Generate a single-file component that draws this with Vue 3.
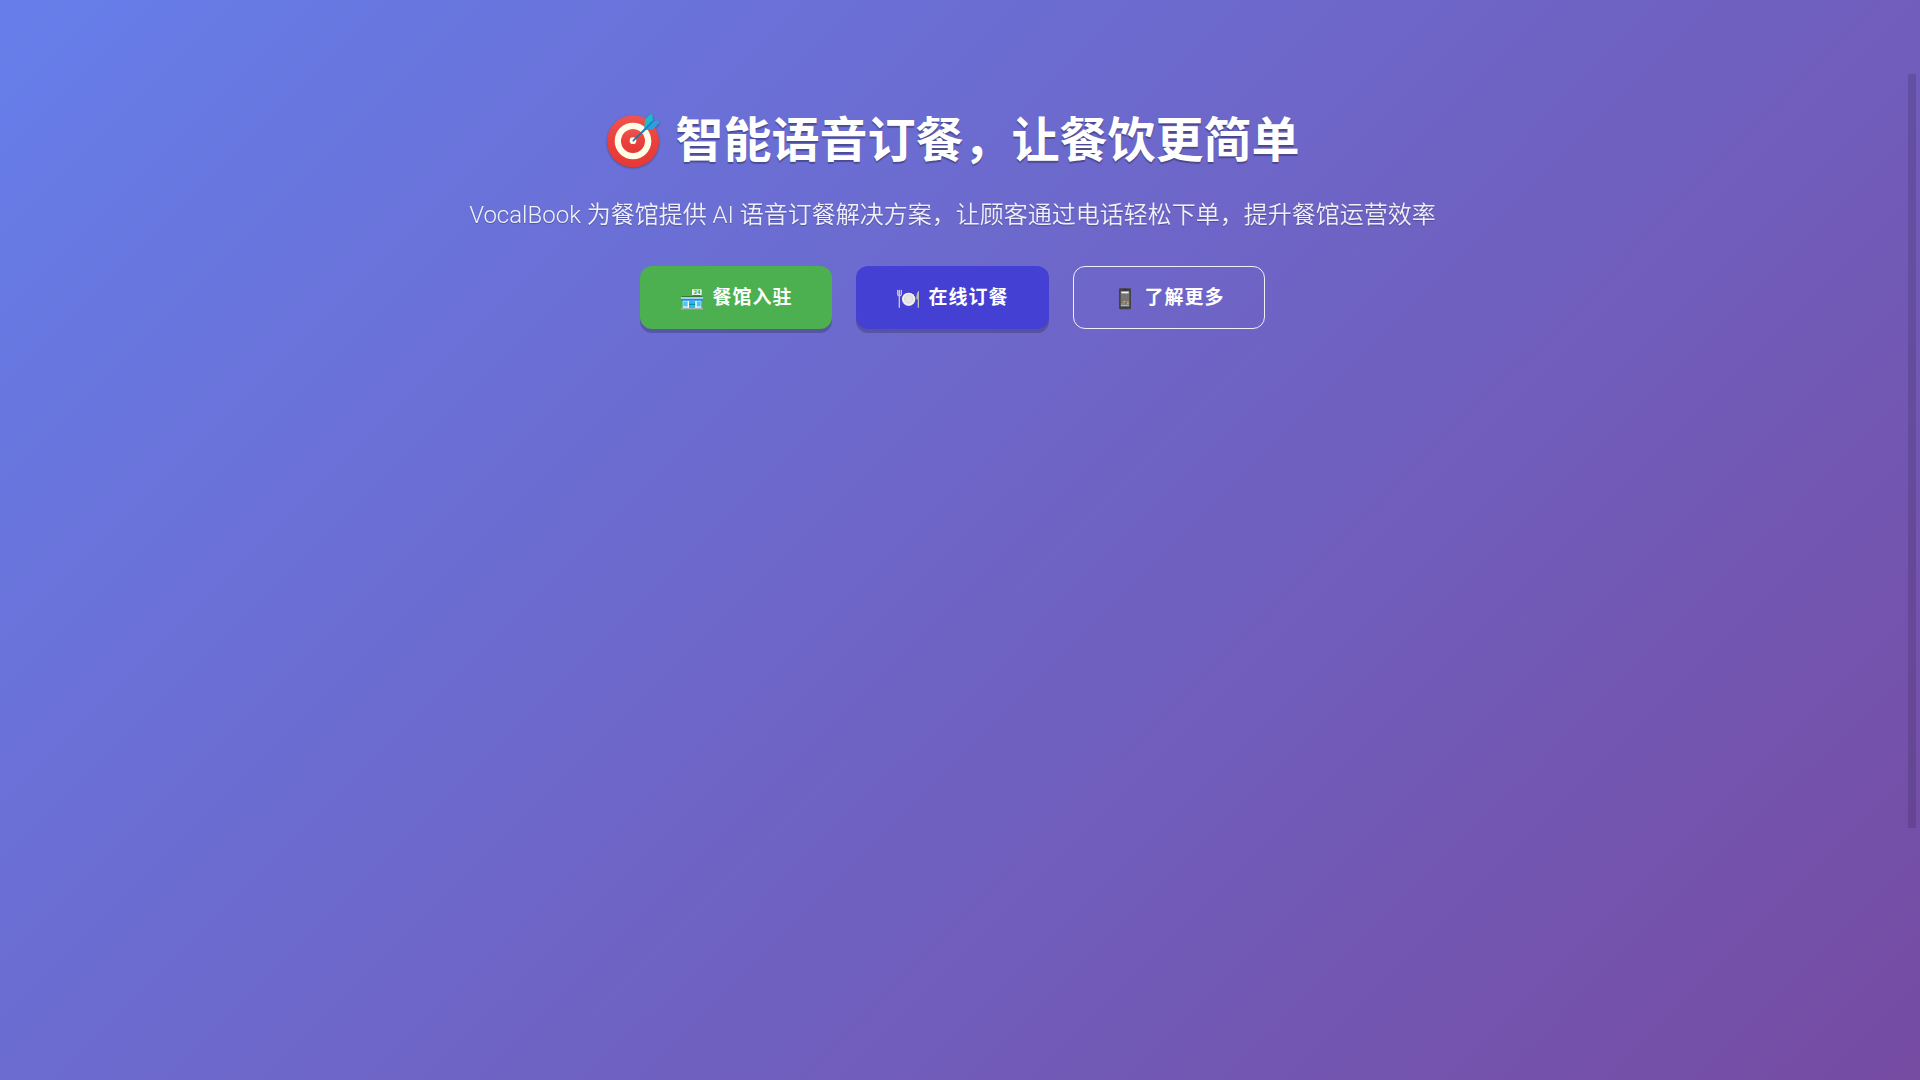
<template>
  <div class="page">
    <main class="hero">
      <h1 class="hero__title">
        <svg class="hero__target" viewBox="18 18 168 168" aria-hidden="true">
          <defs>
            <linearGradient id="targetRed" x1="0" y1="0" x2="0" y2="1">
              <stop offset="0" stop-color="#ef5350" />
              <stop offset="0.55" stop-color="#ea3f3b" />
              <stop offset="1" stop-color="#e53935" />
            </linearGradient>
          </defs>
          <circle cx="102" cy="103" r="78" fill="url(#targetRed)" />
          <circle cx="102" cy="102" r="55" fill="#fffde7" />
          <circle cx="102" cy="102" r="36" fill="url(#targetRed)" />
          <circle cx="102" cy="101" r="10" fill="#fffde7" />
          <path
            d="M103 101L138 67"
            stroke="#1679a8"
            stroke-width="5"
            stroke-linecap="round"
          />
          <path d="M135 70L138 38L154 22Q160 20 161 26L162 44Z" fill="#1cbccd" />
          <path d="M135 70L160 44L176 40Q183 42 180 48L164 66Z" fill="#2f9fdc" />
          <path
            d="M130 75L160 44"
            stroke="#1c84c0"
            stroke-width="6"
            stroke-linecap="round"
          />
        </svg>
        <span>智能语音订餐，让餐饮更简单</span>
      </h1>
      <p class="hero__subtitle">
        VocalBook 为餐馆提供 AI 语音订餐解决方案，让顾客通过电话轻松下单，提升餐馆运营效率
      </p>
      <div class="hero__actions">
        <button type="button" class="hero__button hero__button--register">
          <svg class="hero__icon" viewBox="147 92 72 72" aria-hidden="true">
            <path d="M186 118H207V124H186Z" fill="#1976d2" />
            <rect x="183" y="102" width="29" height="17" fill="#e6f4ea" />
            <text x="188" y="117" font-size="17" font-weight="700" fill="#2e9e5b">
              24
            </text>
            <rect x="155" y="134" width="56" height="25" fill="#b3e5fc" />
            <rect x="157" y="139" width="13" height="13" fill="#4fc3f7" />
            <rect x="197" y="139" width="12" height="13" fill="#4fc3f7" />
            <rect x="174" y="137" width="19" height="21" fill="#29b6f6" />
            <path d="M174 147H193" stroke="#00897b" stroke-width="3" />
            <path d="M172 137V158M195 137V158" stroke="#fff" stroke-width="3" />
            <path d="M152 122H214V127H152Z" fill="#2e7d32" />
            <path d="M150 126H216V131H150Z" fill="#e1f5fe" />
            <path d="M150 130H216V136H150Z" fill="#1e88e5" />
            <path d="M150 158H216V162H150Z" fill="#a5b8b0" />
          </svg>
          <span>餐馆入驻</span>
        </button>
        <button type="button" class="hero__button hero__button--order">
          <svg class="hero__icon" viewBox="152 92 72 72" aria-hidden="true">
            <path
              d="M157 105V116Q157 121 162 122Q168 121 168 116V105M162 105V156"
              fill="none"
              stroke="#c9c7bd"
              stroke-width="4"
              stroke-linecap="round"
            />
            <circle cx="190" cy="132" r="20" fill="#d5d5d5" />
            <circle cx="190" cy="131" r="19" fill="#f1f1f1" />
            <circle
              cx="190"
              cy="131"
              r="13"
              fill="#e4e4e4"
              stroke="#cfcfcf"
              stroke-width="2"
            />
            <path d="M220 106Q212 114 213 132H217V157H221V106Z" fill="#b9b8b1" />
          </svg>
          <span>在线订餐</span>
        </button>
        <button type="button" class="hero__button hero__button--more">
          <svg class="hero__icon" viewBox="156 92 72 72" aria-hidden="true">
            <rect x="174" y="99" width="36" height="63" rx="4" fill="#424242" />
            <rect x="179" y="107" width="26" height="47" fill="#757575" />
            <rect x="181" y="109" width="22" height="5" fill="#f5f5f5" />
            <path d="M187 103H197" stroke="#222" stroke-width="2" />
            <path
              d="M181 139H186M192 144H197"
              stroke="#f44336"
              stroke-width="4"
            />
            <path
              d="M187 139H192M198 144H203"
              stroke="#ffb300"
              stroke-width="4"
            />
            <path
              d="M193 139H198M181 144H186"
              stroke="#4caf50"
              stroke-width="4"
            />
            <path
              d="M198 139H203M187 144H191"
              stroke="#ff7043"
              stroke-width="4"
            />
            <path
              d="M181 150H203"
              stroke="#cfd8dc"
              stroke-width="4"
              stroke-dasharray="4 2"
            />
          </svg>
          <span>了解更多</span>
        </button>
      </div>
    </main>
    <div class="page__scrollbar" aria-hidden="true"></div>
  </div>
</template>

<script setup>
</script>

<style>
body {
  margin: 0;
}
</style>

<style scoped>
.page {
  position: relative;
  box-sizing: border-box;
  min-height: 100vh;
  padding: 105px 15px 64px 0;
  background: linear-gradient(135deg, #667eea 0%, #764ba2 100%);
  color: #fff;
  font-family: Roboto, "Noto Sans CJK SC", sans-serif;
}

.page__scrollbar {
  position: absolute;
  top: 74px;
  right: 4px;
  bottom: 252px;
  width: 8px;
  background: rgba(0, 0, 0, 0.12);
}

.hero {
  display: flex;
  flex-direction: column;
  align-items: center;
  text-align: center;
}

.hero__title {
  display: flex;
  align-items: center;
  gap: 14px;
  margin: 0 0 19px;
  font-size: 48px;
  font-weight: 700;
  line-height: 72px;
  text-shadow: 0 2px 1px rgba(0, 0, 0, 0.3);
}

.hero__target {
  flex-shrink: 0;
  width: 56px;
  height: 56px;
  filter: drop-shadow(0 1px 1px rgba(0, 0, 0, 0.3));
}

.hero__subtitle {
  margin: 0 0 32px;
  font-size: 24px;
  font-weight: 350;
  line-height: 38px;
  opacity: 0.9;
  text-shadow: 0 1px 1px rgba(0, 0, 0, 0.3);
}

.hero__actions {
  display: flex;
  flex-wrap: wrap;
  justify-content: center;
  gap: 24px;
}

.hero__button {
  display: flex;
  align-items: center;
  gap: 8px;
  border: none;
  border-radius: 12px;
  padding: 16px 40px;
  color: #fff;
  font-family: inherit;
  font-size: 19px;
  font-weight: 600;
  line-height: 31px;
  letter-spacing: 1px;
  cursor: pointer;
}

.hero__icon {
  flex-shrink: 0;
  width: 24px;
  height: 24px;
  letter-spacing: 0;
}

.hero__button--register {
  background: #4caf50;
  box-shadow: 0 4px 0 rgba(0, 0, 0, 0.2);
}

.hero__button--order {
  background: #4440d4;
  box-shadow: 0 4px 0 rgba(0, 0, 0, 0.2);
}

.hero__button--more {
  border: 1px solid rgba(255, 255, 255, 0.9);
  padding: 15px 39px;
  background: transparent;
}
</style>
